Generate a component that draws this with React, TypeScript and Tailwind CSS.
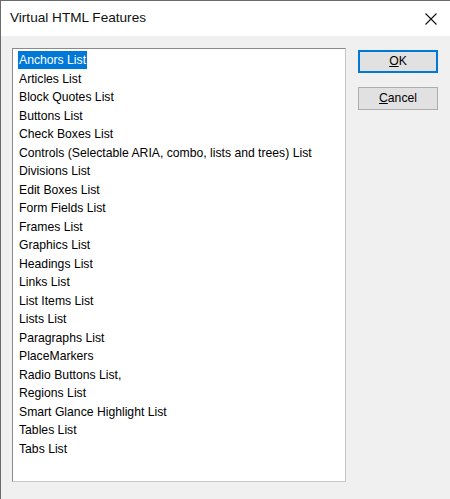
import React from "react";

const items = [
  "Anchors List",
  "Articles List",
  "Block Quotes List",
  "Buttons List",
  "Check Boxes List",
  "Controls (Selectable ARIA, combo, lists and trees) List",
  "Divisions List",
  "Edit Boxes List",
  "Form Fields List",
  "Frames List",
  "Graphics List",
  "Headings List",
  "Links List",
  "List Items List",
  "Lists List",
  "Paragraphs List",
  "PlaceMarkers",
  "Radio Buttons List,",
  "Regions List",
  "Smart Glance Highlight List",
  "Tables List",
  "Tabs List",
];

export default function App() {
  return (
    <div
      className="w-[450px] h-[499px] flex flex-col border-l border-t border-[#6b6b6b] bg-[#f0f0f0] overflow-hidden"
      style={{ fontFamily: '"Liberation Sans", Arial, sans-serif' }}
    >
      <div className="h-[35px] bg-white flex items-center justify-between pl-[9px] pr-[12px] shrink-0">
        <span className="text-[13.6px] text-[#111]">Virtual HTML Features</span>
        <svg width="12" height="12" viewBox="0 0 12 12" className="mr-[1px]">
          <path d="M0.5 0.5 L11.5 11.5 M11.5 0.5 L0.5 11.5" stroke="#111" strokeWidth="1.1" fill="none" />
        </svg>
      </div>
      <div className="flex pl-[11px] pt-[12px]">
        <div className="w-[334px] h-[434px] bg-white border border-[#8a8a8a] border-r-[#c8c8c8] border-b-[#c8c8c8] pl-[5px] pt-[2px] text-[12.2px] text-black">
          {items.map((t, i) => (
            <div key={t} className="h-[18.52px] leading-[18.52px] whitespace-nowrap">
              <span className={i === 0 ? "bg-[#0078d7] text-white px-[1px] inline-block h-[18px] leading-[18px]" : "px-[1px]"}>
                {t}
              </span>
            </div>
          ))}
        </div>
        <div className="flex flex-col ml-[12px] pt-[2px] gap-[14px]">
          <button className="w-[80px] h-[23px] bg-[#e1e1e1] border-2 border-[#0078d7] text-[12.2px] text-black flex items-center justify-center">
            <span><u>O</u>K</span>
          </button>
          <button className="w-[80px] h-[23px] bg-[#e1e1e1] border border-[#adadad] text-[12.2px] text-black flex items-center justify-center">
            <span><u>C</u>ancel</span>
          </button>
        </div>
      </div>
    </div>
  );
}
